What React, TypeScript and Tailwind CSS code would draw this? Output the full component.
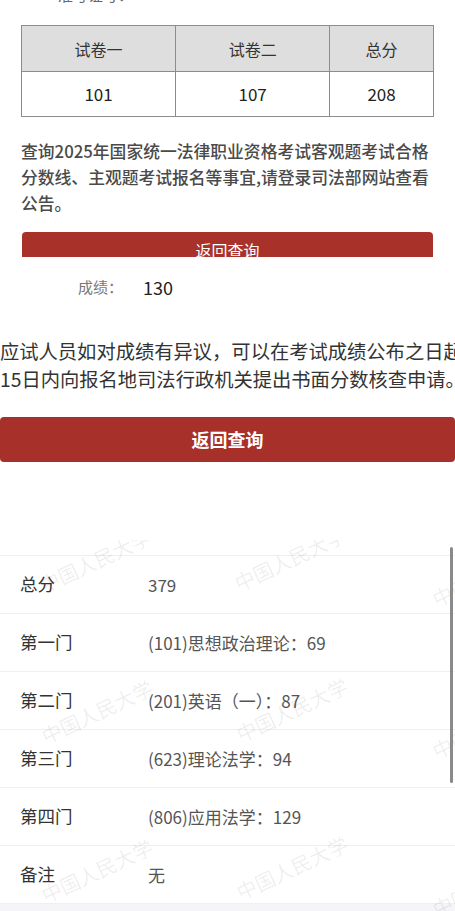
import React from 'react'

const papers = [
  { head: '试卷一', score: '101' },
  { head: '试卷二', score: '107' },
  { head: '总分', score: '208' },
]

const subjects = [
  { label: '总分', value: '379' },
  { label: '第一门', value: '(101)思想政治理论：69' },
  { label: '第二门', value: '(201)英语（一）：87' },
  { label: '第三门', value: '(623)理论法学：94' },
  { label: '第四门', value: '(806)应用法学：129' },
  { label: '备注', value: '无' },
]

// watermark spots, written out so tailwind picks them up
const marks = [
  'left-[35px] top-[6px]',
  'left-[230px] top-[4px]',
  'left-[428px] top-[20px]',
  'left-[37px] top-[157px]',
  'left-[232px] top-[155px]',
  'left-[428px] top-[172px]',
  'left-[37px] top-[316px]',
  'left-[232px] top-[313px]',
  'left-[428px] top-[330px]',
]

function ObjectiveResult() {
  return (
    <div className="h-[257px] overflow-hidden bg-white">
      <div className="h-[7px] overflow-hidden pl-[58px]">
        <p className="-mt-[15px] text-[15px] leading-[20px] text-[#666]">准考证号：</p>
      </div>

      <table className="mx-[21px] mt-[18px] w-[413px] border-collapse text-center">
        <thead>
          <tr className="h-[46px] bg-[#dedede]">
            {papers.map(p => (
              <th key={p.head} className="border-[1.5px] border-[#8c8c8c] text-[16px] font-normal text-[#333]">
                {p.head}
              </th>
            ))}
          </tr>
        </thead>
        <tbody>
          <tr className="h-[45px]">
            {papers.map(p => (
              <td key={p.head} className="border-[1.5px] border-[#8c8c8c] text-[17px] text-[#222]">
                {p.score}
              </td>
            ))}
          </tr>
        </tbody>
      </table>

      <p className="mt-[21px] px-[21px] whitespace-nowrap text-[16.8px] font-medium leading-[26px] text-[#4a4a4a]">
        查询2025年国家统一法律职业资格考试客观题考试合格
        <br />
        分数线、主观题考试报名等事宜,请登录司法部网站查看
        <br />
        公告。
      </p>

      <button
        type="button"
        className="mx-[22px] mt-[16px] flex h-[36px] w-[411px] items-center justify-center rounded-t-[4px] bg-[#a8322a] text-[16px] text-white"
      >
        返回查询
      </button>
    </div>
  )
}

function SubjectiveResult() {
  return (
    <div className="h-[283px] overflow-hidden bg-white">
      <div className="flex items-center pl-[78px] pt-[16px] leading-[28px]">
        <span className="w-[65px] text-[15px] text-[#777]">成绩：</span>
        <span className="text-[18px] text-[#222]">130</span>
      </div>

      <p className="mt-[36px] whitespace-nowrap text-[19.3px] leading-[28px] text-[#333]">
        应试人员如对成绩有异议，可以在考试成绩公布之日起
        <br />
        15日内向报名地司法行政机关提出书面分数核查申请。
      </p>

      <button
        type="button"
        className="mt-[24px] flex h-[45px] w-full items-center justify-center rounded-[4px] bg-[#a8302a] text-[18px] font-bold text-white"
      >
        返回查询
      </button>
    </div>
  )
}

function ScoreList() {
  return (
    <div className="relative flex-1 overflow-hidden bg-[#f5f5f7]">
      <div className="bg-white pt-[15px]">
        <div className="border-t border-[#efefef]">
          {subjects.map(s => (
            <div key={s.label} className="flex h-[58px] items-center border-b border-[#efefef] pl-[20px]">
              <span className="w-[128px] text-[17.5px] text-[#333]">{s.label}</span>
              <span className="text-[17px] text-[#555]">{s.value}</span>
            </div>
          ))}
        </div>
      </div>

      {marks.map(m => (
        <span
          key={m}
          className={`pointer-events-none absolute ${m} -rotate-[25deg] whitespace-nowrap text-[20px] text-black/[0.08]`}
        >
          中国人民大学
        </span>
      ))}

      <div className="absolute right-[2px] top-[7px] h-[236px] w-[3px] rounded-full bg-[#8a8a8a]" />
    </div>
  )
}

export default function App() {
  return (
    <div className="flex h-[911px] w-[455px] flex-col overflow-hidden bg-white font-['Noto_Sans_CJK_SC',sans-serif]">
      <ObjectiveResult />
      <SubjectiveResult />
      <ScoreList />
    </div>
  )
}
